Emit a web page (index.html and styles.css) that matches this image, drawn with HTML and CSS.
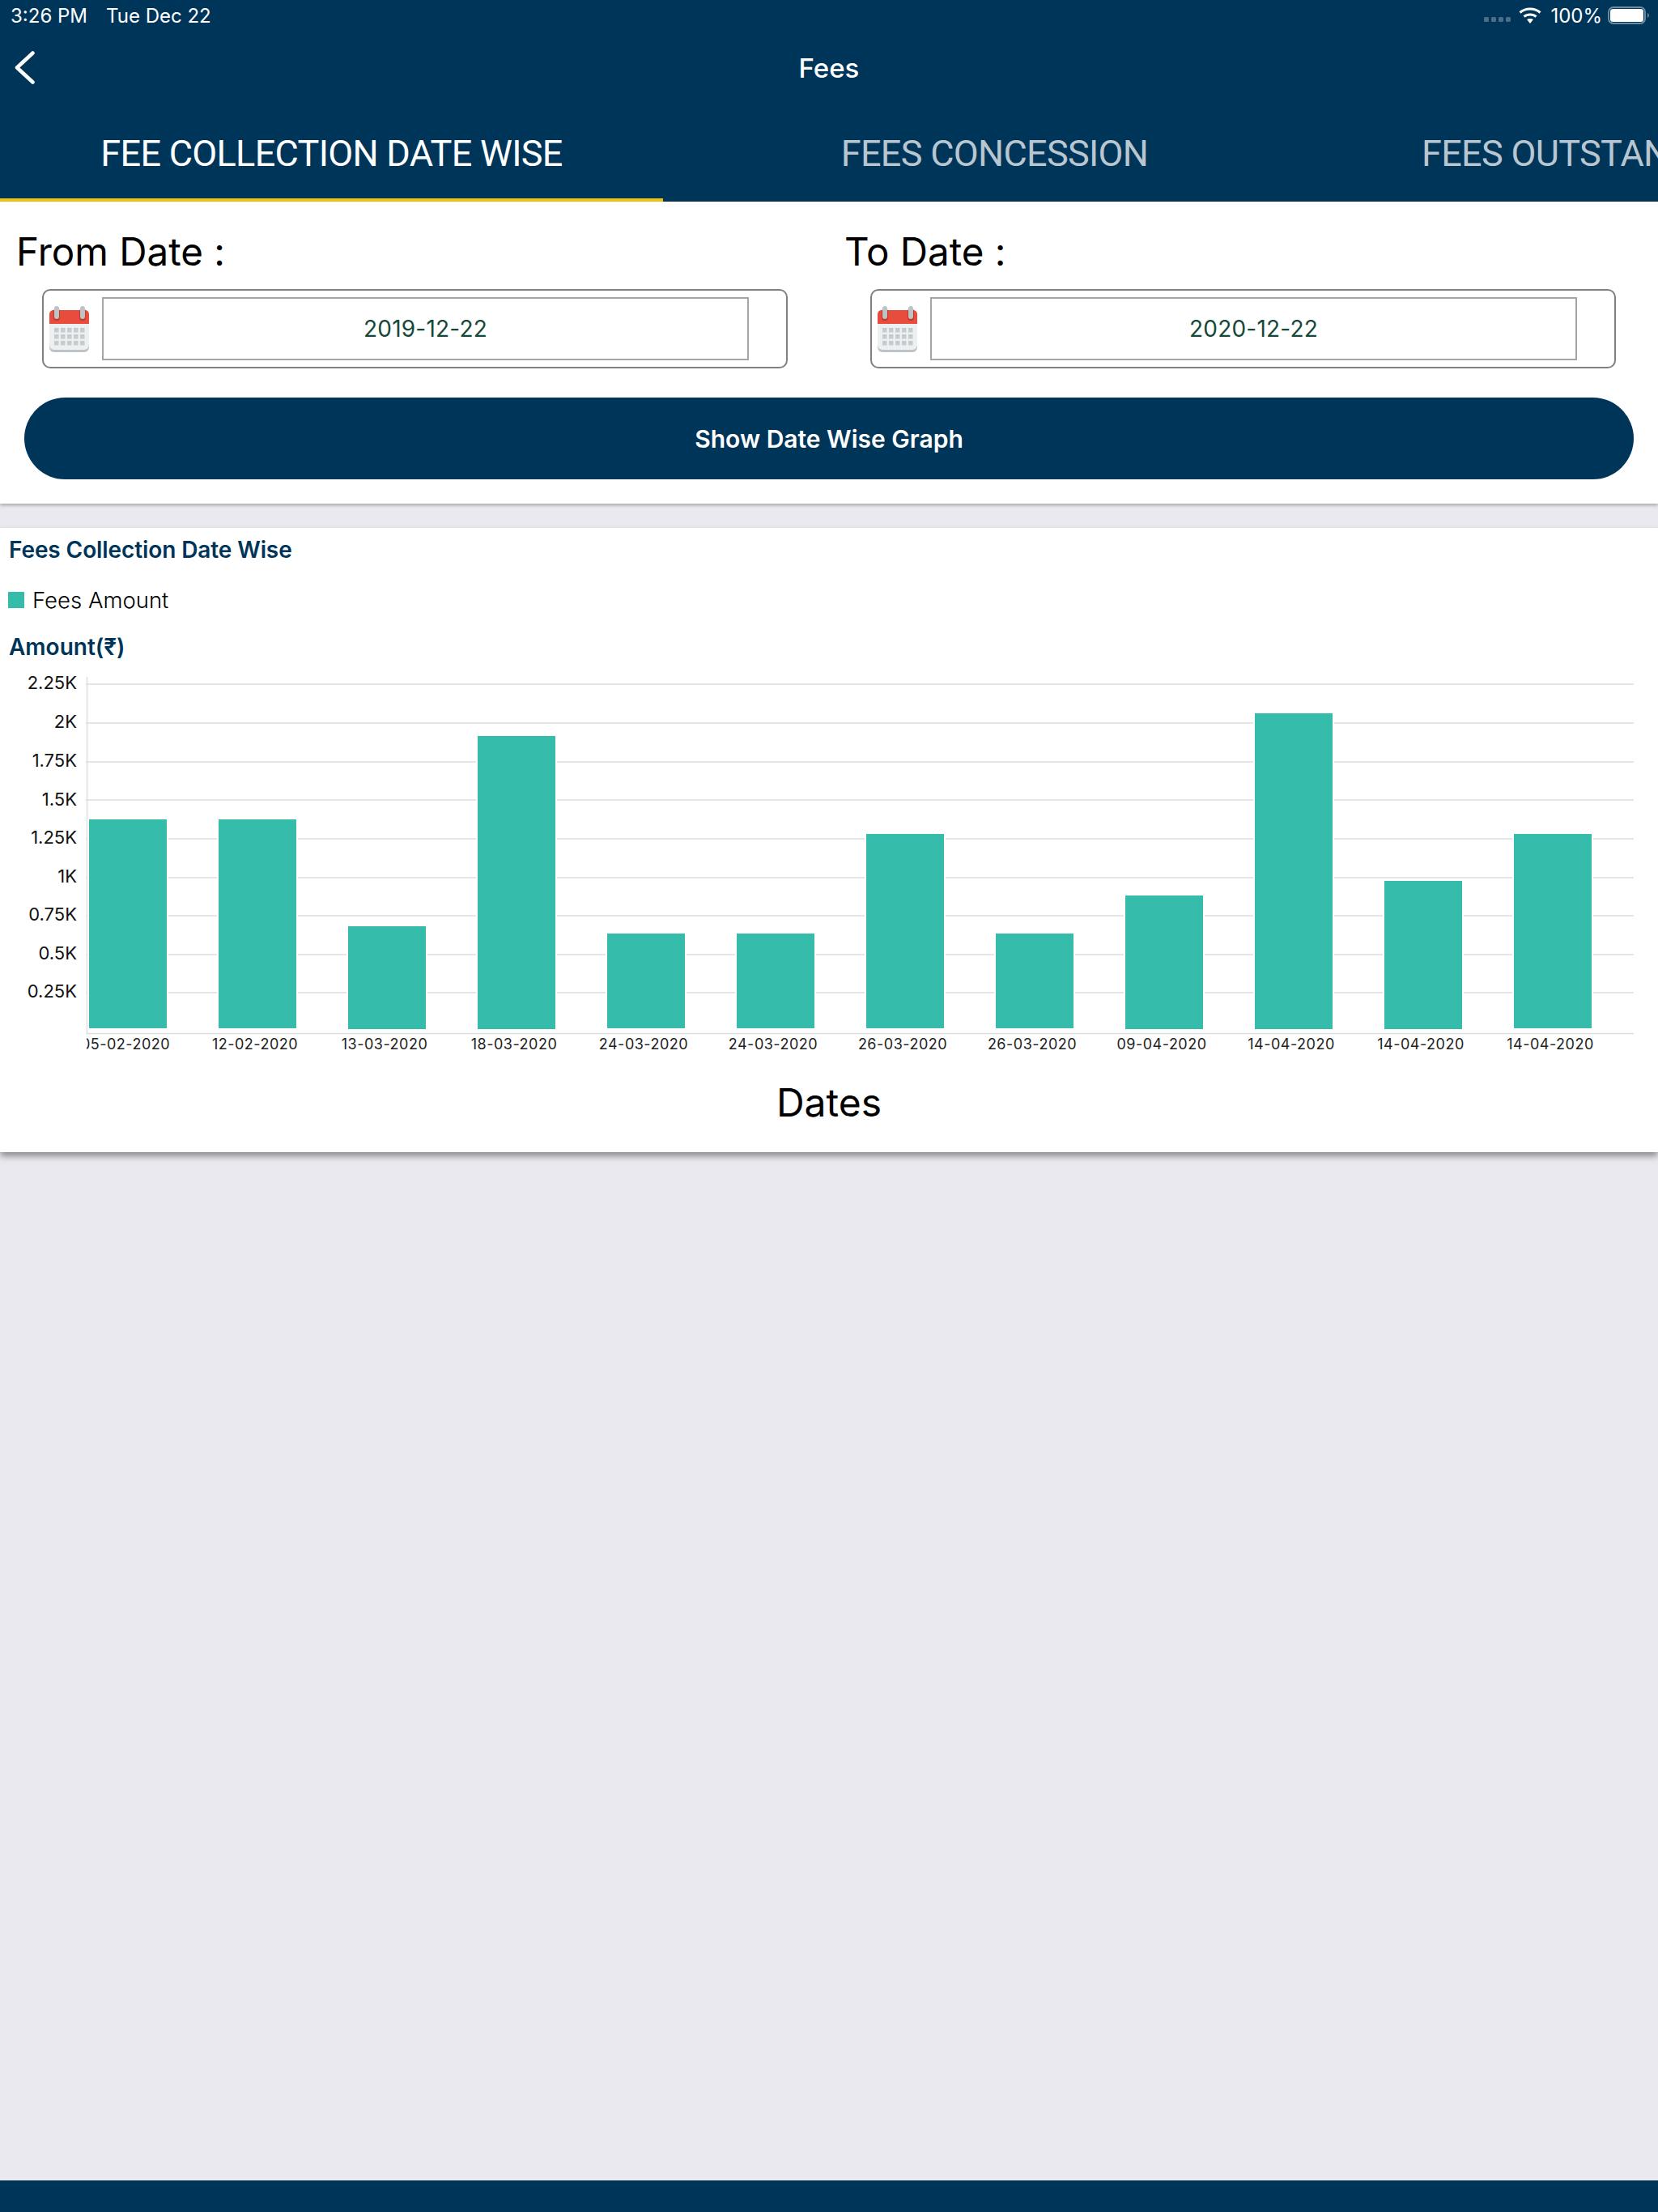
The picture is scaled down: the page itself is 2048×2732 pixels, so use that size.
FILE: index.html
```html
<!DOCTYPE html>
<html lang="en">
<head>
    <meta charset="UTF-8">
    <meta name="viewport" content="width=device-width, initial-scale=1.0">
    <title>Fees</title>
    <link rel="stylesheet" href="styles.css">
</head>
<body>
    <svg class="defs">
        <symbol id="cal-icon" viewBox="0 0 49 57">
            <path d="M0 22H49V51a6 6 0 0 1-6 6H6a6 6 0 0 1-6-6Z" fill="#bdc3c7"/>
            <path d="M0 22H49V48a6 6 0 0 1-6 6H6a6 6 0 0 1-6-6Z" fill="#ecf0f1"/>
            <path d="M0 22V10a5 5 0 0 1 5-5H44a5 5 0 0 1 5 5V22Z" fill="#e74c3c"/>
            <rect x="5" y="3" width="8" height="15" rx="4" fill="#c0392b"/>
            <rect x="37" y="3" width="8" height="15" rx="4" fill="#c0392b"/>
            <rect x="6" y="0" width="6" height="16" rx="3" fill="#bdc3c7"/>
            <rect x="38" y="0" width="6" height="16" rx="3" fill="#bdc3c7"/>
            <g fill="#bdc3c7" opacity="0.8">
                <rect x="6" y="27" width="5.500" height="5.500"/><rect x="14" y="27" width="5.500" height="5.500"/><rect x="22" y="27" width="5.500" height="5.500"/><rect x="30" y="27" width="5.500" height="5.500"/><rect x="38" y="27" width="5.500" height="5.500"/>
                <rect x="6" y="35" width="5.500" height="5.500"/><rect x="14" y="35" width="5.500" height="5.500"/><rect x="22" y="35" width="5.500" height="5.500"/><rect x="30" y="35" width="5.500" height="5.500"/><rect x="38" y="35" width="5.500" height="5.500"/>
                <rect x="6" y="43" width="5.500" height="5.500"/><rect x="14" y="43" width="5.500" height="5.500"/><rect x="22" y="43" width="5.500" height="5.500"/><rect x="30" y="43" width="5.500" height="5.500"/><rect x="38" y="43" width="5.500" height="5.500"/>
            </g>
        </symbol>
    </svg>

    <div class="app">
        <header class="header">
            <div class="status-bar">
                <div class="status-left"><span>3:26 PM</span><span>Tue Dec 22</span></div>
                <div class="status-right">
                    <svg class="signal" width="33" height="6" viewBox="0 0 33 6"><g fill="#4c6d86"><rect x="0" y="0" width="6" height="6" rx="1.500"/><rect x="9" y="0" width="6" height="6" rx="1.500"/><rect x="18" y="0" width="6" height="6" rx="1.500"/><rect x="27" y="0" width="6" height="6" rx="1.500"/></g></svg>
                    <svg class="wifi" width="28" height="20" viewBox="0 0 28 20"><g fill="none" stroke="#fff" stroke-width="3"><path d="M1.500 6.500C8.500 .5 19.500 .5 26.500 6.500"/><path d="M6.500 11.500C10.500 8 17.500 8 21.500 11.500"/></g><path d="M10 15C12 13.500 16 13.500 18 15L14 20Z" fill="#fff"/></svg>
                    <span class="battery-pct">100%</span>
                    <svg class="battery" width="52" height="22" viewBox="0 0 52 22"><rect x="1" y="1" width="45" height="20" rx="6" fill="none" stroke="#6f8ba1" stroke-width="2"/><rect x="3" y="3" width="41" height="16" rx="3.500" fill="#fff"/><path d="M49 8C51.500 9 51.500 13 49 14Z" fill="#6f8ba1"/></svg>
                </div>
            </div>
            <div class="nav-bar">
                <svg class="back" width="25" height="41" viewBox="0 0 25 41"><path d="M22.500 2.500L3 20.500L22.500 38.500" fill="none" stroke="#fff" stroke-width="4.500" stroke-linecap="round" stroke-linejoin="round"/></svg>
                <h1>Fees</h1>
            </div>
            <nav class="tabs">
                <div class="tab active">FEE COLLECTION DATE WISE</div>
                <div class="tab">FEES CONCESSION</div>
                <div class="tab tab-cut">FEES OUTSTANDING</div>
            </nav>
        </header>

        <section class="filter-card">
            <div class="date-row">
                <div class="date-col">
                    <label>From Date :</label>
                    <div class="date-box">
                        <svg class="cal"><use href="#cal-icon"/></svg>
                        <div class="date-value">2019-12-22</div>
                    </div>
                </div>
                <div class="date-col">
                    <label>To Date :</label>
                    <div class="date-box">
                        <svg class="cal"><use href="#cal-icon"/></svg>
                        <div class="date-value">2020-12-22</div>
                    </div>
                </div>
            </div>
            <button class="show-btn">Show Date Wise Graph</button>
        </section>

        <section class="chart-card">
            <h2>Fees Collection Date Wise</h2>
            <div class="legend"><span class="swatch"></span>Fees Amount</div>
            <div class="axis-title">Amount(₹)</div>
            <svg class="chart" width="2048" height="472" viewBox="0 0 2048 472">
                <defs>
                    <clipPath id="plot"><rect x="107" y="0" width="1941" height="472"/></clipPath>
                </defs>
                <g class="grid">
                    <line x1="106" x2="2018" y1="15" y2="15"/>
                    <line x1="106" x2="2018" y1="63" y2="63"/>
                    <line x1="106" x2="2018" y1="111" y2="111"/>
                    <line x1="106" x2="2018" y1="158" y2="158"/>
                    <line x1="106" x2="2018" y1="206" y2="206"/>
                    <line x1="106" x2="2018" y1="254" y2="254"/>
                    <line x1="106" x2="2018" y1="301" y2="301"/>
                    <line x1="106" x2="2018" y1="349" y2="349"/>
                    <line x1="106" x2="2018" y1="396" y2="396"/>
                    <line x1="106" x2="2018" y1="446.500" y2="446.500"/>
                    <line x1="107.500" x2="107.500" y1="6" y2="446"/>
                </g>
                <g class="y-labels">
                    <text x="95" y="21">2.25K</text>
                    <text x="95" y="69">2K</text>
                    <text x="95" y="117">1.75K</text>
                    <text x="95" y="165">1.5K</text>
                    <text x="95" y="212">1.25K</text>
                    <text x="95" y="260">1K</text>
                    <text x="95" y="307">0.75K</text>
                    <text x="95" y="355">0.5K</text>
                    <text x="95" y="402">0.25K</text>
                </g>
                <g class="bars">
                    <rect x="110" y="182" width="96" height="258"/>
                    <rect x="270" y="182" width="96" height="258"/>
                    <rect x="430" y="314" width="96" height="127"/>
                    <rect x="590" y="79" width="96" height="362"/>
                    <rect x="750" y="323" width="96" height="117"/>
                    <rect x="910" y="323" width="96" height="117"/>
                    <rect x="1070" y="200" width="96" height="240"/>
                    <rect x="1230" y="323" width="96" height="117"/>
                    <rect x="1390" y="276" width="96" height="165"/>
                    <rect x="1550" y="51" width="96" height="390"/>
                    <rect x="1710" y="258" width="96" height="183"/>
                    <rect x="1870" y="200" width="96" height="240"/>
                </g>
                <g class="x-labels" clip-path="url(#plot)">
                    <text x="155" y="466">05-02-2020</text>
                    <text x="315" y="466">12-02-2020</text>
                    <text x="475" y="466">13-03-2020</text>
                    <text x="635" y="466">18-03-2020</text>
                    <text x="795" y="466">24-03-2020</text>
                    <text x="955" y="466">24-03-2020</text>
                    <text x="1115" y="466">26-03-2020</text>
                    <text x="1275" y="466">26-03-2020</text>
                    <text x="1435" y="466">09-04-2020</text>
                    <text x="1595" y="466">14-04-2020</text>
                    <text x="1755" y="466">14-04-2020</text>
                    <text x="1915" y="466">14-04-2020</text>
                </g>
            </svg>
            <div class="x-title">Dates</div>
        </section>

        <div class="spacer"></div>
        <footer class="bottom-bar"></footer>
    </div>
</body>
</html>
```
FILE: styles.css
```css
body {
    margin: 0;
    font-family: Inter, Arial, sans-serif;
}
.defs {
    display: none;
}
.app {
    height: 2732px;
    overflow: hidden;
    display: flex;
    flex-direction: column;
    background: #e9e9ef;
}

/* header */
.header {
    background: #00355a;
    color: white;
}
.status-bar {
    height: 38px;
    padding: 0 10px 0 13px;
    display: flex;
    justify-content: space-between;
    align-items: center;
    font-size: 24px;
}
.status-left {
    display: flex;
    gap: 23px;
}
.status-right {
    display: flex;
    align-items: center;
}
.signal {
    margin: 10px 10px 0 0;
}
.battery-pct {
    margin: 0 7px 0 11px;
}
.nav-bar {
    height: 91px;
    padding-left: 18px;
    display: flex;
    align-items: center;
}
.nav-bar h1 {
    flex: 1;
    margin: 0 43px 0 0;
    text-align: center;
    font-size: 33px;
    font-weight: 500;
}
.tabs {
    height: 120px;
    display: flex;
    overflow: hidden;
}
.tab {
    flex: 0 0 819px;
    box-sizing: border-box;
    display: flex;
    align-items: center;
    justify-content: center;
    white-space: nowrap;
    font-family: Roboto, Arial, sans-serif;
    font-size: 45px;
    letter-spacing: -0.7px;
    color: #b9c5cf;
}
.tab.active {
    color: white;
    border-bottom: 4px solid #f1c40f;
    padding-top: 4px;
}
.tab-cut {
    justify-content: flex-start;
    padding-left: 118px;
}

/* date filter */
.filter-card {
    height: 373px;
    background: white;
    box-shadow: 0 2px 4px rgba(0, 0, 0, 0.3);
}
.date-row {
    display: grid;
    grid-template-columns: 1023px 1023px;
    padding-left: 20px;
}
.date-col label {
    display: block;
    height: 108px;
    line-height: 124px;
    font-size: 47.5px;
    font-weight: 400;
    color: black;
}
.date-box {
    box-sizing: border-box;
    width: 921px;
    height: 98px;
    margin-left: 32px;
    padding: 0 46px 0 7px;
    display: flex;
    align-items: center;
    gap: 16px;
    border: 2px solid #808080;
    border-radius: 10px;
}
.cal {
    flex: none;
    width: 49px;
    height: 57px;
}
.date-value {
    flex: 1;
    height: 78px;
    box-sizing: border-box;
    line-height: 74px;
    border: 2px solid #a5a5a5;
    text-align: center;
    font-size: 28px;
    letter-spacing: 0.2px;
    color: #16483a;
}
.show-btn {
    display: block;
    width: 1988px;
    height: 101px;
    margin: 36px 0 0 30px;
    background-color: #00355a;
    color: white;
    border: none;
    border-radius: 51px;
    font-family: inherit;
    font-size: 30px;
    font-weight: 600;
}

/* chart */
.chart-card {
    margin-top: 30px;
    height: 771px;
    background: white;
    box-shadow: 0 5px 8px rgba(0, 0, 0, 0.4);
}
.chart-card h2 {
    margin: 0;
    padding: 10px 0 0 11px;
    height: 46px;
    line-height: 34px;
    font-size: 28px;
    font-weight: 600;
    letter-spacing: -0.1px;
    color: #00355a;
}
.legend {
    height: 34px;
    margin-top: 16px;
    padding-left: 10px;
    display: flex;
    align-items: center;
    gap: 10px;
    font-size: 27.5px;
    font-weight: 300;
    color: black;
}
.swatch {
    width: 20px;
    height: 20px;
    background: #35bcaa;
}
.axis-title {
    height: 34px;
    margin-top: 24px;
    padding-left: 11px;
    line-height: 34px;
    font-size: 28px;
    font-weight: 600;
    color: #00355a;
}
.chart {
    display: block;
    margin-top: 14px;
}
.grid line {
    stroke: #dedede;
    stroke-width: 1.5;
}
.y-labels text {
    font-size: 22px;
    text-anchor: end;
    fill: #111;
}
.x-labels text {
    font-size: 18px;
    letter-spacing: 0.5px;
    text-anchor: middle;
    fill: #222;
}
.bars rect {
    fill: #35bcaa;
    stroke: white;
    stroke-width: 4;
    paint-order: stroke;
}
.x-title {
    margin-top: 30px;
    text-align: center;
    font-size: 48px;
    font-weight: 400;
    color: black;
}
.spacer {
    flex: 1;
}
.bottom-bar {
    height: 39px;
    background: #00355a;
}
```
